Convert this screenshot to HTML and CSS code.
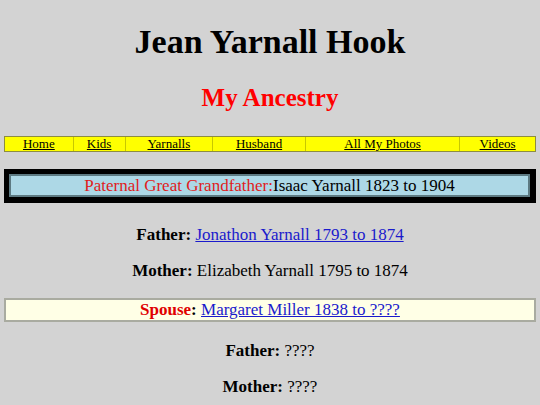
FILE: index.html
```html
<!DOCTYPE html>
<html>
<head>
<meta charset="utf-8">
<title>Jean Yarnall Hook</title>
<link rel="stylesheet" href="styles.css">
</head>
<body>
<h1 class="title">Jean Yarnall Hook</h1>
<h2 class="subtitle">My Ancestry</h2>
<nav class="nav">
  <a class="nav-cell" href="#">Home</a>
  <a class="nav-cell" href="#">Kids</a>
  <a class="nav-cell" href="#">Yarnalls</a>
  <a class="nav-cell" href="#">Husband</a>
  <a class="nav-cell" href="#">All My Photos</a>
  <a class="nav-cell" href="#">Videos</a>
</nav>
<div class="frame">
  <div class="frame-inner"><span class="red">Paternal Great Grandfather:</span>Isaac Yarnall 1823 to 1904</div>
</div>
<p class="line line-first"><b>Father:</b> <a href="#">Jonathon Yarnall 1793 to 1874</a></p>
<p class="line"><b>Mother:</b> Elizabeth Yarnall 1795 to 1874</p>
<div class="spouse"><b><span class="red">Spouse</span>:</b> <a href="#">Margaret Miller 1838 to ????</a></div>
<p class="line line-after"><b>Father:</b> ????</p>
<p class="line"><b>Mother:</b> ????</p>
</body>
</html>
```
FILE: styles.css
```css
html, body {
  margin: 0;
  padding: 0;
}
body {
  background: #d3d3d3;
  font-family: "Liberation Serif", "Times New Roman", serif;
  color: #000;
  padding: 0 4px;
  text-align: center;
}
.title {
  margin: 24px 0 0;
  font-size: 34px;
  line-height: 36px;
  font-weight: bold;
}
.subtitle {
  margin: 24px 0 0;
  font-size: 25px;
  line-height: 28px;
  font-weight: bold;
  color: #ff0000;
}
.nav {
  margin-top: 24px;
  display: grid;
  grid-template-columns: 68fr 52fr 88fr 93fr 155fr 76fr;
  background: #ffff00;
  border: 1px solid #8d8d40;
  height: 16px;
  box-sizing: border-box;
}
.nav-cell {
  display: block;
  font-size: 13px;
  line-height: 14px;
  color: #000;
  text-decoration: underline;
  border-left: 1px solid #c8c800;
}
.nav-cell:first-child {
  border-left: none;
}
.frame {
  margin-top: 17px;
  background: #000;
  padding: 5px 6px 6px 5px;
}
.frame-inner {
  background: #add8e6;
  border: 2px solid #5d7a82;
  font-size: 17px;
  line-height: 19px;
}
.red {
  color: #e01c1c;
}
a {
  color: #1a1acc;
}
.line {
  margin: 16px 0 0;
  font-size: 17px;
  line-height: 20px;
}
.line-first {
  margin-top: 22px;
}
.spouse {
  margin-top: 17px;
  background: #ffffe6;
  border: 2px solid #a9aba0;
  font-size: 17px;
  line-height: 20px;
}
.spouse .red {
  color: #e00000;
}
.line-after {
  margin-top: 19px;
}
```
